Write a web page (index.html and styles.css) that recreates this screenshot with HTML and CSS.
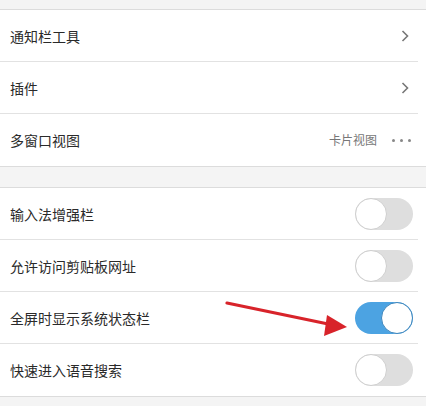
FILE: index.html
```html
<!DOCTYPE html>
<html lang="zh">
<head>
<meta charset="utf-8">
<link rel="stylesheet" href="styles.css">
</head>
<body>
<div class="page">
  <div class="gap gap-top"></div>
  <div class="group">
    <div class="row"><span class="label">通知栏工具</span><svg class="chev" width="10" height="14" viewBox="0 0 10 14"><path d="M2.5 2 L7.5 7 L2.5 12" fill="none" stroke="#777" stroke-width="1.6"/></svg></div>
    <div class="row"><span class="label">插件</span><svg class="chev" width="10" height="14" viewBox="0 0 10 14"><path d="M2.5 2 L7.5 7 L2.5 12" fill="none" stroke="#777" stroke-width="1.6"/></svg></div>
    <div class="row"><span class="label">多窗口视图</span><span class="value">卡片视图</span><span class="dots"><i></i><i></i><i></i></span></div>
  </div>
  <div class="gap gap-mid"></div>
  <div class="group">
    <div class="row"><span class="label">输入法增强栏</span><span class="toggle"></span></div>
    <div class="row"><span class="label">允许访问剪贴板网址</span><span class="toggle"></span></div>
    <div class="row"><span class="label">全屏时显示系统状态栏</span><span class="toggle on"></span>
      <svg class="arrow" width="130" height="40" viewBox="0 0 130 40"><line x1="2" y1="3" x2="108" y2="25" stroke="#d8232a" stroke-width="3.2" stroke-linecap="round"/><polygon points="122,27 102,15 99,36" fill="#d8232a"/></svg>
    </div>
    <div class="row"><span class="label">快速进入语音搜索</span><span class="toggle"></span></div>
  </div>
  <div class="gap gap-bot"></div>
</div>
</body>
</html>
```
FILE: styles.css
```css
html, body { margin: 0; padding: 0; }
body {
  background: #f4f4f4;
  font-family: "Noto Sans CJK SC", "Noto Sans", sans-serif;
  width: 426px;
  height: 406px;
  overflow: hidden;
}
.page { display: flex; flex-direction: column; }
.gap { background: #f4f4f4; }
.gap-top { height: 9px; }
.gap-mid { height: 20px; }
.gap-bot { height: 10px; }
.group {
  background: #fff;
  border-top: 1px solid #dcdcdc;
  border-bottom: 1px solid #dcdcdc;
}
.row {
  position: relative;
  height: 52px;
  display: flex;
  align-items: center;
  padding: 0 12px 0 10px;
}
.row + .row::before {
  content: "";
  position: absolute;
  top: -1px; left: 0; right: 8px;
  height: 1px;
  background: #e2e2e2;
}
.label {
  flex: 1;
  font-size: 14px;
  line-height: 18px;
  color: #2a2a2a;
}
.chev { margin-right: 4px; }
.value {
  font-size: 12px;
  line-height: 16px;
  color: #777;
  margin-right: 15px;
}
.dots { display: flex; gap: 5px; margin-right: 3px; }
.dots i { width: 3px; height: 3px; border-radius: 50%; background: #888; display: block; }
.toggle {
  width: 58px;
  height: 32px;
  border-radius: 16px;
  background: #dedede;
  position: relative;
  margin-right: 1px;
  box-sizing: border-box;
}
.toggle::after {
  content: "";
  position: absolute;
  left: 0; top: 0;
  width: 32px; height: 32px;
  border-radius: 50%;
  background: #fff;
  border: 1px solid #cfcfcf;
  box-sizing: border-box;
}
.toggle.on { background: #4ca3e2; }
.toggle.on::after { left: 26px; border-color: #3d86bd; }
.arrow { position: absolute; left: 225px; top: 8px; }
```
